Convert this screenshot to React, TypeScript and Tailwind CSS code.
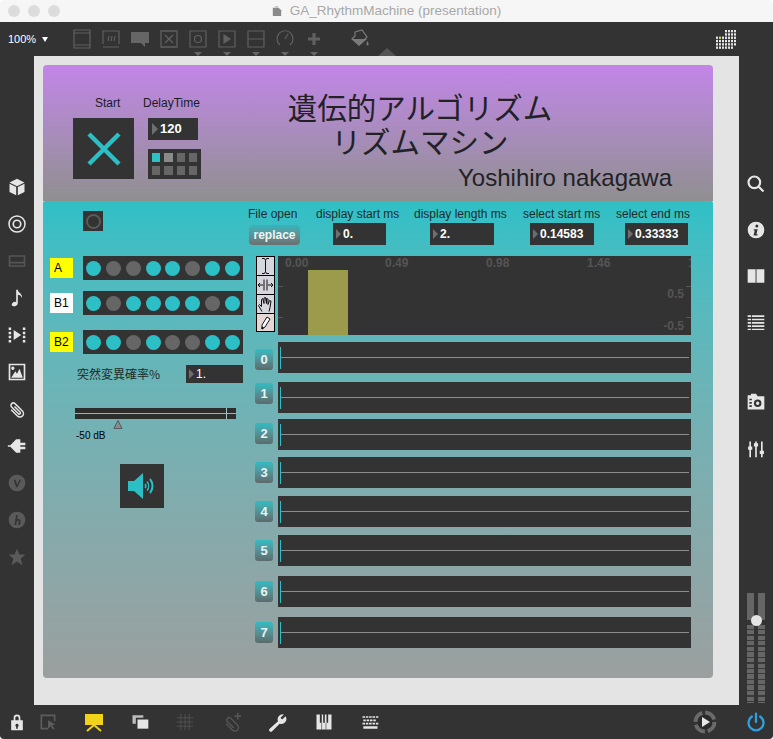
import type { ReactNode } from "react"

const sans = "font-['Liberation_Sans',Arial,sans-serif]"

function NumBox({ value, className }: { value: string; className: string }) {
  return (
    <div className={`flex items-center bg-[#333333] text-white text-[12px] font-bold ${className}`}>
      <span className="ml-[3px] mr-[2px] h-0 w-0 border-y-[5px] border-l-[5px] border-y-transparent border-l-[#6e6e6e]" />
      {value}
    </div>
  )
}

function Pads({ on }: { on: number[] }) {
  return (
    <div className="ml-[10px] flex h-[24px] w-[160px] items-center justify-between bg-[#333333] px-[3px]">
      {on.map((v, i) => (
        <span key={i} className={v ? "h-[15px] w-[15px] rounded-full bg-[#2dbfc6]" : "h-[15px] w-[15px] rounded-full bg-[#666666]"} />
      ))}
    </div>
  )
}

const rows = [
  { n: "0", row: "mt-[7px]", btn: "mt-[7px]" },
  { n: "1", row: "mt-[9px]", btn: "mt-[1px]" },
  { n: "2", row: "mt-[6px]", btn: "mt-[4px]" },
  { n: "3", row: "mt-[7px]", btn: "mt-[5px]" },
  { n: "4", row: "mt-[8px]", btn: "mt-[5px]" },
  { n: "5", row: "mt-[8px]", btn: "mt-[5px]" },
  { n: "6", row: "mt-[10px]", btn: "mt-[5px]" },
  { n: "7", row: "mt-[10px]", btn: "mt-[5px]" },
]

function Track({ n, row, btn }: { n: string; row: string; btn: string }) {
  return (
    <div className={`flex h-[31px] ${row}`}>
      <div className={`ml-[7px] flex h-[21px] w-[18px] items-center justify-center rounded-[3px] bg-gradient-to-b from-[#2cbcc2] to-[#5c6a6c] text-[13px] font-bold text-[#e8f4f4] ${btn}`}>
        {n}
      </div>
      <div className="relative ml-[5px] flex w-[413px] items-center bg-[#333333] px-[2px]">
        <div className="h-px w-full bg-[#8c8c8c]" />
        <span className="absolute left-[2px] top-[5px] bottom-[4px] w-px bg-[#2dbfc6]" />
      </div>
    </div>
  )
}

function ToolIcon({ children, pink }: { children: ReactNode; pink?: boolean }) {
  return (
    <div className={pink ? "h-[19px] w-[19px] border border-black bg-[#e6d6d6] -mt-px" : "h-[20px] w-[19px] border border-black bg-[#d6d6de] -mt-px first:mt-0"}>
      <svg viewBox="0 0 17 17" className="h-full w-full" fill="none" stroke="#111" strokeWidth="1">
        {children}
      </svg>
    </div>
  )
}

function Bar({ children, className = "", vb = "0 0 24 24" }: { children: ReactNode; className?: string; vb?: string }) {
  return (
    <svg viewBox={vb} className={`h-[20px] w-[20px] shrink-0 ${className}`} fill="currentColor">
      {children}
    </svg>
  )
}

function Drop({ children }: { children: ReactNode }) {
  return (
    <div className="relative h-[20px] w-[20px] shrink-0">
      <svg viewBox="0 0 20 20" className="h-full w-full" fill="none" stroke="#606060" strokeWidth="1.2">
        {children}
      </svg>
      <span className="absolute left-[6px] top-[23px] h-0 w-0 border-x-[4px] border-t-[4px] border-x-transparent border-t-[#666666]" />
    </div>
  )
}

// dot grid at the top right of the toolbar
const dotRows = [
  [3, 6],
  [3, 6],
  [0, 6],
  [0, 6],
  [0, 6],
  [0, 5],
]

function Toolbar() {
  return (
    <div className="flex h-[34px] items-center bg-[#333333] pl-[8px]">
      <span className={`text-[11px] text-white ${sans}`}>100%</span>
      <span className="ml-[6px] h-0 w-0 border-x-[3px] border-t-[5px] border-x-transparent border-t-white" />
      <div className="ml-[24px] flex items-center gap-[9px]">
        <div className="h-[20px] w-[20px] shrink-0">
          <svg viewBox="0 0 20 20" className="h-full w-full" fill="none" stroke="#606060" strokeWidth="1.2">
            <path d="M2 1h16v18H2zM2 4h16M2 16h16" />
          </svg>
        </div>
        <div className="h-[20px] w-[20px] shrink-0">
          <svg viewBox="0 0 20 20" className="h-full w-full" fill="none" stroke="#606060" strokeWidth="1.2">
            <path d="M2 15V2h16v13M2 18h16M7 12l1-5M10 12l1-5M13 12l1-5" />
          </svg>
        </div>
        <div className="h-[20px] w-[20px] shrink-0">
          <svg viewBox="0 0 20 20" className="h-full w-full" fill="#666666">
            <path d="M1 3h18v11h-4v4l-4-4H1z" />
          </svg>
        </div>
        <div className="h-[20px] w-[20px] shrink-0">
          <svg viewBox="0 0 20 20" className="h-full w-full" fill="none" stroke="#606060" strokeWidth="1.3">
            <path d="M2 2h16v16H2zM6 6l8 8M14 6l-8 8" />
          </svg>
        </div>
        <Drop>
          <path d="M2 2h16v16H2z" />
          <circle cx="10" cy="10" r="3.5" />
        </Drop>
        <Drop>
          <path d="M2 2h16v16H2z" />
          <path d="M7 6l6 4-6 4z" fill="#606060" />
        </Drop>
        <Drop>
          <path d="M2 2h16v16H2zM2 10h16" />
        </Drop>
        <Drop>
          <path d="M5 16a8 8 0 1 1 10 0M10 10l3-5" />
        </Drop>
        <Drop>
          <path d="M10 4v12M4 10h12" strokeWidth="3.2" />
        </Drop>
        <div className="ml-[17px] h-[20px] w-[20px] shrink-0">
          <svg viewBox="0 0 20 20" className="h-full w-full" fill="#7a7a7a">
            <path d="M5 3l7-2 5 7-8 8-7-6 3-3z" fill="none" stroke="#7a7a7a" strokeWidth="1.2" />
            <path d="M2 10h15l-8 7z" />
            <path d="M17.500 12c1.500 2.500 1.500 4.500 0 4.500s-1.500-2 0-4.500z" />
          </svg>
        </div>
      </div>
      <span className="ml-[8px] mt-[26px] h-0 w-0 border-x-[9px] border-b-[8px] border-x-transparent border-b-[#555555]" />
      <svg viewBox="0 0 20 19" className="ml-auto mr-[37px] h-[19px] w-[20px]">
        {dotRows.map(([from, to], r) =>
          Array.from({ length: to - from + 1 }, (_, i) => (
            <rect key={`${r}-${i}`} x={(from + i) * 3} y={r * 3.3} width="2" height="2.300" fill={r === 2 && from + i === 1 ? "#d8d060" : "#e6e6e6"} />
          )),
        )}
      </svg>
    </div>
  )
}

function LeftBar() {
  return (
    <div className="flex w-[34px] shrink-0 flex-col items-center gap-[17px] bg-[#333333] pt-[121px] text-[#e6e6e6]">
      <Bar><path d="M12 2l9 4.500-9 4.500-9-4.500zM3 8l8 4v10l-8-4zM21 8l-8 4v10l8-4z" /></Bar>
      <Bar><path fillRule="evenodd" d="M12 1.500a10.500 10.500 0 1 1 0 21 10.500 10.500 0 0 1 0-21zm0 1.800a8.700 8.700 0 1 0 0 17.400 8.700 8.700 0 0 0 0-17.400zm0 3.200a5.500 5.500 0 1 1 0 11 5.500 5.500 0 0 1 0-11zm0 2a3.500 3.500 0 1 0 0 7 3.500 3.500 0 0 0 0-7z" /></Bar>
      <Bar className="text-[#555555]"><path fillRule="evenodd" d="M2 5h20v14H2zm2 2v6h16V7zM4 15v2h16v-2z" /></Bar>
      <Bar><path d="M11 2h2c0 4 6 4 5 10-1-3-3-4-5-4v10c0 3-3 4-5 4s-3-2-2-3c1-2 3-3 5-2z" /></Bar>
      <Bar><path d="M2 3h3v3H2zM2 8h3v3H2zM2 13h3v3H2zM2 18h3v3H2zM19 3h3v3h-3zM19 8h3v3h-3zM19 13h3v3h-3zM19 18h3v3h-3zM8 6l9 6-9 6z" /></Bar>
      <Bar className="text-[#e6e6e6]"><path fillRule="evenodd" d="M2 2h20v20H2zm2 2v16h16V4zm3 1.500a2 2 0 1 1 0 4 2 2 0 0 1 0-4zM5 19l5-8 2 3 3-6 4 11z" /></Bar>
      <Bar className="-scale-x-100"><path d="M19 13l-7.500 7.500a4 4 0 0 1-6-6L15 5a3 3 0 0 1 4 4l-9 9a1.500 1.500 0 0 1-2-2l7-7" fill="none" stroke="currentColor" strokeWidth="1.800" /></Bar>
      <Bar><path d="M1 11h3l7-7h5v4h6v3h-6v2h6v3h-6v4h-5l-7-7H1z" /></Bar>
      <Bar className="text-[#5a5a5a]"><path fillRule="evenodd" d="M12 2a10 10 0 1 1 0 20 10 10 0 0 1 0-20zM8 8l3 9h1.500L17 8h-2l-2.500 6L10 8z" /></Bar>
      <Bar className="text-[#5a5a5a]"><path fillRule="evenodd" d="M12 2a10 10 0 1 1 0 20 10 10 0 0 1 0-20zM11 6L9 18h2l.8-4.500c1.500-1.500 2.700-1 2.200 1L13.500 18h2l.7-4c.5-3-2-4-4-2.500L12.800 6z" /></Bar>
      <Bar className="text-[#5a5a5a]"><path d="M12 2l3 7h7l-5.500 5 2 8-6.500-4.500L5.500 22l2-8L2 9h7z" /></Bar>
    </div>
  )
}

function RightBar() {
  return (
    <div className="flex w-[34px] shrink-0 flex-col items-center bg-[#333333] pt-[118px] text-[#e6e6e6]">
      <Bar><path d="M10 3a7 7 0 1 1 0 14 7 7 0 0 1 0-14zM15 15l6 6" fill="none" stroke="currentColor" strokeWidth="2.600" /></Bar>
      <Bar className="mt-[26px]"><path fillRule="evenodd" d="M12 2a10 10 0 1 1 0 20 10 10 0 0 1 0-20zm1 3.500a1.800 1.800 0 1 0 0 3.600 1.800 1.800 0 0 0 0-3.600zM9.500 11h4.500l-1.500 6h1.500l-.3 1.500H9l1.500-6H9.200z" /></Bar>
      <Bar className="mt-[26px]"><path d="M2 4h9.500v16H2zM13 4h9v16h-9z" /><path d="M11.500 4H13v16h-1.500z" fill="#9a9a9a" /></Bar>
      <Bar className="mt-[26px]"><path d="M2 4h4v2H2zM7 4h15v2H7zM2 8h4v2H2zM7 8h15v2H7zM2 12h4v2H2zM7 12h15v2H7zM2 16h4v2H2zM7 16h15v2H7zM2 20h4v1.500H2zM7 20h15v1.500H7z" /></Bar>
      <Bar className="mt-[60px]"><path fillRule="evenodd" d="M6 2h6l2 3h8v16H2V4h4zm8 7a4.500 4.500 0 1 0 0 9 4.500 4.500 0 0 0 0-9zm0 2.500a2 2 0 1 1 0 4 2 2 0 0 1 0-4zM4 8v2h3V8zm0 4v2h3v-2zm0 4v2h3v-2z" /></Bar>
      <Bar className="mt-[27px]"><path d="M4 3h2v6h1.500v4H6v9H4v-9H2.500V9H4zM11 3h2v2h1.500v4H13v13h-2V9H9.500V5H11zM18 3h2v11h1.500v4H20v4h-2v-4h-1.500v-4H18z" /></Bar>
      <div className="relative mt-[134px] flex w-[18px] justify-between">
        {[0, 1].map((c) => (
          <div key={c} className="flex w-[7px] flex-col">
            <div className="h-[27px] bg-[#666666]" />
            <div className="mt-[5px] h-[78px] bg-[repeating-linear-gradient(to_bottom,#666666_0,#666666_4px,#3a3a3a_4px,#3a3a3a_5.500px)]" />
          </div>
        ))}
        <span className="absolute left-[4px] top-[22px] h-[11px] w-[11px] rounded-full bg-[#e4e4e4]" />
      </div>
    </div>
  )
}

function BottomBar() {
  return (
    <div className="flex h-[34px] items-center rounded-b-[4px] bg-[#333333] text-[#e6e6e6]">
      <div className="flex flex-1 items-center pl-[7px]">
        <Bar><path fillRule="evenodd" d="M8 10V7a4 4 0 0 1 8 0v3h3v12H5V10zm2 0h4V7a2 2 0 0 0-4 0zm2 4a2 2 0 0 0-1 3.700V20h2v-2.300A2 2 0 0 0 12 14z" /></Bar>
        <Bar className="ml-[11px] text-[#5c5c5c]"><path d="M3 3h18v8h-2V5H5v14h7v2H3z" /><path d="M12 10l9 5-4 1 3 4-2 1-3-4-3 3z" /></Bar>
        <svg viewBox="0 0 20 20" className="ml-[26px] h-[20px] w-[20px] shrink-0">
          <path d="M1 2h18v11H1z" fill="#f2d31b" />
          <path d="M3 19l7-6 7 6" fill="none" stroke="#f2d31b" strokeWidth="2" />
        </svg>
        <Bar className="ml-[26px]"><path d="M3 4h13v3H7v7H3z" fill="#bcbcbc" /><path d="M9 9h13v11H9z" /></Bar>
        <Bar className="ml-[25px] text-[#555555]"><path d="M7 2v20M12 2v20M17 2v20M2 7h20M2 12h20M2 17h20" fill="none" stroke="currentColor" strokeWidth="1" /></Bar>
        <Bar className="ml-[27px] text-[#555555]">
          <g transform="translate(24 2) scale(-1 1)">
            <path d="M19 12l-7.500 7.500a4 4 0 0 1-6-6L14 5a3 3 0 0 1 4 4l-8 8" fill="none" stroke="currentColor" strokeWidth="1.800" />
          </g>
          <path d="M18 1h2v3h3v2h-3v3h-2V6h-3V4h3z" />
        </Bar>
        <Bar className="ml-[26px]"><path d="M21 5l-4 4-2-2 4-4a6 6 0 0 0-7 8L2 20a1.500 1.500 0 0 0 3 3l9-9a6 6 0 0 0 7-9z" /></Bar>
        <Bar className="ml-[26px]"><path fillRule="evenodd" d="M3 3h18v18H3zM7 3h2v10H7zM11 3h2v10h-2zM15 3h2v10h-2z" /><path d="M9 13V3h-.8v10zM9 21h.7v-8H9zM14 21h.7v-8H14z" fill="#333333" /></Bar>
        <Bar className="ml-[26px]"><path d="M3 5h3v2H3zM7 5h3v2H7zM11 5h3v2h-3zM15 5h3v2h-3zM19 5h3v2h-3zM4 9h3v2H4zM8 9h3v2H8zM12 9h3v2h-3zM16 9h3v2h-3zM3 13h3v2H3zM7 13h3v2H7zM11 13h3v2h-3zM15 13h3v2h-3zM19 13h3v2h-3zM4 17h17v3H4z" /></Bar>
      </div>
      <svg viewBox="0 0 24 24" className="mr-[29px] h-[24px] w-[24px]">
        <circle cx="12" cy="12" r="9.500" fill="none" stroke="#6a6a6a" strokeWidth="4" strokeDasharray="12 2.900" />
        <circle cx="12" cy="12" r="7" fill="#2a2a2a" />
        <path d="M9 7l8 5-8 5z" fill="#e6e6e6" />
      </svg>
      <svg viewBox="0 0 24 24" className="mr-[7px] h-[20px] w-[20px]" fill="none" stroke="#2f9fe0" strokeWidth="2.800" strokeLinecap="round">
        <path d="M12 2v10M7 5.500a9 9 0 1 0 10 0" />
      </svg>
    </div>
  )
}

function Header() {
  return (
    <div className={`flex h-[136px] rounded-t-[4px] bg-gradient-to-b from-[#c285e8] to-[#8f8f8f] pl-[30px] text-[#1c1c22] ${sans}`}>
      <div className="w-[61px] pt-[31px]">
        <div className="ml-[22px] h-[22px] text-[12px] leading-[14px]">Start</div>
        <div className="flex h-[61px] w-[61px] items-center justify-center bg-[#333333]">
          <svg viewBox="0 0 40 40" className="h-[40px] w-[40px]" stroke="#2dbfc6" strokeWidth="4.500">
            <path d="M5 5l30 30M35 5L5 35" />
          </svg>
        </div>
      </div>
      <div className="ml-[14px] w-[53px] pt-[31px]">
        <div className="-ml-[5px] h-[22px] whitespace-nowrap text-[12px] leading-[14px]">DelayTime</div>
        <div className="flex h-[22px] w-[50px] items-center bg-[#333333] text-[13px] font-bold text-white">
          <span className="ml-[4px] mr-[2px] h-0 w-0 border-y-[6px] border-l-[6px] border-y-transparent border-l-[#6e6e6e]" />
          120
        </div>
        <div className="mt-[9px] grid h-[30px] w-[53px] grid-cols-4 gap-x-[4px] gap-y-[4px] bg-[#333333] px-[4px] py-[4px]">
          <span className="bg-[#2dbfc6]" />
          <span className="bg-[#8a8a8a]" />
          <span className="bg-[#666666]" />
          <span className="bg-[#666666]" />
          <span className="bg-[#666666]" />
          <span className="bg-[#666666]" />
          <span className="bg-[#666666]" />
          <span className="bg-[#666666]" />
        </div>
      </div>
      <div className="flex flex-1 flex-col">
        <div className="ml-[86px] mt-[24px] w-[266px] whitespace-nowrap text-center font-['Noto_Sans_CJK_JP',sans-serif] text-[29.5px] font-normal leading-[34px] text-[#222226]">
          <div>遺伝的アルゴリズム</div>
          <div>リズムマシン</div>
        </div>
        <div className="mr-[41px] mt-[7px] text-right text-[24px] leading-[28px] text-[#222226]">Yoshihiro nakagawa</div>
      </div>
    </div>
  )
}

function Controls() {
  return (
    <div className="w-[205px] shrink-0 text-black">
      <div className="ml-[40px] mt-[10px] flex h-[20px] w-[20px] items-center justify-center bg-[#333333]">
        <span className="h-[15px] w-[15px] rounded-full border-2 border-[#5a5a5a]" />
      </div>
      <div className="mt-[25px] flex items-center pl-[7px]">
        <span className="flex h-[20px] w-[23px] items-center bg-[#ffff00] pl-[4px] text-[12px]">A</span>
        <Pads on={[1, 0, 0, 1, 1, 0, 1, 1]} />
      </div>
      <div className="mt-[11px] flex items-center pl-[7px]">
        <span className="flex h-[20px] w-[23px] items-center bg-white pl-[4px] text-[12px]">B1</span>
        <Pads on={[1, 0, 1, 1, 1, 1, 0, 1]} />
      </div>
      <div className="mt-[15px] flex items-center pl-[7px]">
        <span className="flex h-[20px] w-[23px] items-center bg-[#ffff00] pl-[4px] text-[12px]">B2</span>
        <Pads on={[1, 1, 0, 1, 0, 0, 1, 1]} />
      </div>
      <div className="mt-[11px] flex h-[18px] items-center pl-[34px] pr-[5px]">
        <span className="whitespace-nowrap font-['Noto_Sans_CJK_JP',sans-serif] text-[12px] text-[#1c2c2c]">突然変異確率%</span>
        <NumBox value="1." className="ml-auto h-[18px] w-[57px] font-normal" />
      </div>
      <div className="relative ml-[32px] mt-[25px] flex h-[11px] w-[161px] items-center bg-[#2d2d2d]">
        <div className="h-px w-full bg-[#8fb8b8]" />
        <span className="absolute left-[151px] top-0 h-full w-px bg-[#9fc4c4]" />
      </div>
      <svg viewBox="0 0 10 10" className="ml-[70px] mt-[1px] h-[9px] w-[10px]">
        <path d="M5 .5l4.500 9H.5z" fill="#8a8a8a" stroke="#555555" strokeWidth="1" />
      </svg>
      <div className="ml-[33px] mt-[1px] text-[10px] leading-[11px]">-50 dB</div>
      <div className="ml-[77px] mt-[23px] flex h-[44px] w-[44px] items-center justify-center bg-[#333333]">
        <svg viewBox="0 0 30 30" className="h-[30px] w-[30px]" fill="none" stroke="#2dbfc6">
          <path d="M1 10h6l9-8v26l-9-8H1z" fill="#2dbfc6" stroke="none" />
          <path d="M18 13a3 3 0 0 1 0 4" strokeWidth="1.500" />
          <path d="M20 10.500a7 7 0 0 1 0 9" strokeWidth="1.500" />
          <path d="M23 8a11 11 0 0 1 0 14" strokeWidth="2" />
        </svg>
      </div>
    </div>
  )
}

function Wave() {
  return (
    <div className="mt-[11px] flex">
      <div className="ml-[8px] w-[19px] flex-col">
        <ToolIcon><path d="M5 1h2.500L8.500 3l1-2H12M8.500 3v11M5 16h2.500l1-2 1 2H12" /></ToolIcon>
        <ToolIcon><path d="M7 3v11M10 3v11M1 8.500h5M11 8.500h5M3 6.500L1 8.500l2 2M14 6.500l2 2-2 2" /></ToolIcon>
        <ToolIcon><path d="M5 16L1.500 10l1-1 2 2V4l1.200-1L7 8V2.500L8.500 2 9.500 8V3l1.500.500L11 9l1.500-4 1.500.500L13 12l-1 4" /></ToolIcon>
        <ToolIcon pink><path d="M5 11l5-8 3 2-5 8-3 2z" fill="#fff" /><path d="M5 15l1-2" strokeWidth="2" /></ToolIcon>
      </div>
      <div className={`relative ml-[3px] h-[79px] w-[413px] overflow-hidden bg-[#333333] text-[12px] font-bold leading-[14px] text-[#555555] ${sans}`}>
        <span className="absolute left-[30px] top-[14px] bottom-0 w-[40px] bg-[#9c9b4b]" />
        <span className="absolute left-[7px] top-0">0.00</span>
        <span className="absolute left-[107px] top-0">0.49</span>
        <span className="absolute left-[208px] top-0">0.98</span>
        <span className="absolute left-[309px] top-0">1.46</span>
        <span className="absolute left-[410px] top-0">1</span>
        <span className="absolute right-[7px] top-[31px]">0.5</span>
        <span className="absolute right-[7px] top-[63px]">-0.5</span>
        <span className="absolute left-0 top-[30px] h-px w-[5px] bg-[#555555]" />
        <span className="absolute left-0 top-[61px] h-px w-[5px] bg-[#555555]" />
        <span className="absolute right-0 top-[30px] h-px w-[5px] bg-[#555555]" />
        <span className="absolute right-0 top-[61px] h-px w-[5px] bg-[#555555]" />
      </div>
    </div>
  )
}

function Editor() {
  return (
    <div className="w-[465px]">
      <div className={`flex h-[44px] pt-[6px] text-[12px] leading-[14px] text-[#1c2c2c] ${sans}`}>
        <div className="w-[68px]">
          <div>File open</div>
          <div className="ml-[1px] mt-[4px] flex h-[20px] w-[51px] items-center justify-center rounded-[4px] bg-gradient-to-b from-[#2fb5ba] to-[#6c6f70] text-[12px] font-bold text-[#eef6f6]">replace</div>
        </div>
        <div className="w-[98px]">
          <div className="whitespace-nowrap">display start ms</div>
          <NumBox value="0." className="ml-[17px] mt-[2px] h-[22px] w-[53px]" />
        </div>
        <div className="w-[109px]">
          <div className="whitespace-nowrap">display length ms</div>
          <NumBox value="2." className="ml-[16px] mt-[2px] h-[22px] w-[64px]" />
        </div>
        <div className="w-[93px]">
          <div className="whitespace-nowrap">select start ms</div>
          <NumBox value="0.14583" className="ml-[7px] mt-[2px] h-[22px] w-[64px]" />
        </div>
        <div className="w-[90px]">
          <div className="whitespace-nowrap">select end ms</div>
          <NumBox value="0.33333" className="ml-[9px] mt-[2px] h-[22px] w-[63px]" />
        </div>
      </div>
      <Wave />
      <div className={sans}>
        {rows.map((r) => (
          <Track key={r.n} {...r} />
        ))}
      </div>
    </div>
  )
}

export default function App() {
  return (
    <div className={`flex h-[739px] w-[773px] flex-col overflow-hidden bg-white ${sans}`}>
      <div className="relative flex h-[22px] shrink-0 items-center justify-center rounded-t-[4px] bg-[#f6f6f6] text-[13.5px] text-[#a8a8a8]">
        <div className="absolute left-[8px] top-[5px] flex gap-[8px]">
          <span className="h-[12px] w-[12px] rounded-full bg-[#dcdcdc]" />
          <span className="h-[12px] w-[12px] rounded-full bg-[#dcdcdc]" />
          <span className="h-[12px] w-[12px] rounded-full bg-[#dcdcdc]" />
        </div>
        <svg viewBox="0 0 12 14" className="mr-[8px] h-[12px] w-[10px]"><path d="M1 3h7l3 3v7H1z" fill="#8a8a8a" /><path d="M4 1h3v2H4z" fill="#bbbbbb" /></svg>
        GA_RhythmMachine (presentation)
      </div>
      <Toolbar />
      <div className="flex min-h-0 flex-1">
        <LeftBar />
        <div className="flex-1 bg-[#e4e4e4] pb-[27px] pl-[9px] pr-[26px] pt-[9px]">
          <Header />
          <div className="flex h-[477px] rounded-b-[4px] rounded-t-[2px] bg-gradient-to-b from-[#2dc0c6] to-[#9b9f9f]">
            <Controls />
            <Editor />
          </div>
        </div>
        <RightBar />
      </div>
      <BottomBar />
    </div>
  )
}
